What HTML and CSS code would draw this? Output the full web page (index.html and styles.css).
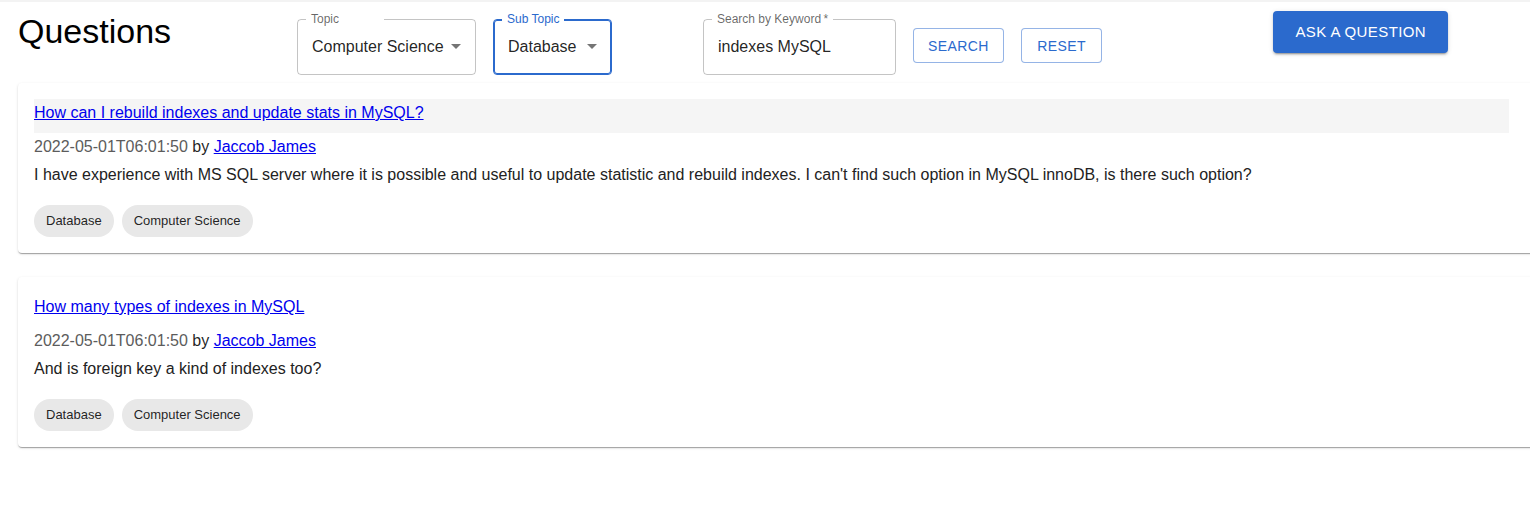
FILE: index.html
```html
<!DOCTYPE html>
<html lang="en">
<head>
<meta charset="utf-8">
<title>Questions</title>
<link rel="stylesheet" href="styles.css">
</head>
<body>
<div class="page">
  <header class="toolbar">
    <h1 class="page-title">Questions</h1>
    <div class="filters">
      <div class="field field-select field-topic">
        <span class="field-label label-topic">Topic</span>
        <span class="field-value">Computer Science</span>
        <svg class="select-arrow" viewBox="0 0 24 24" aria-hidden="true"><path d="M7 10l5 5 5-5z"/></svg>
      </div>
      <div class="field field-select field-subtopic is-focused">
        <span class="field-label">Sub Topic</span>
        <span class="field-value">Database</span>
        <svg class="select-arrow" viewBox="0 0 24 24" aria-hidden="true"><path d="M7 10l5 5 5-5z"/></svg>
      </div>
      <div class="field field-search">
        <span class="field-label">Search by Keyword&thinsp;*</span>
        <span class="field-value">indexes MySQL</span>
      </div>
      <button class="btn btn-outlined" type="button">Search</button>
      <button class="btn btn-outlined btn-reset" type="button">Reset</button>
    </div>
    <button class="btn btn-contained" type="button">Ask a Question</button>
  </header>

  <main class="question-list">
    <article class="question-card">
      <div class="q-title-bar is-highlighted">
        <a class="q-title" href="#">How can I rebuild indexes and update stats in MySQL?</a>
      </div>
      <div class="q-meta"><span class="q-date">2022-05-01T06:01:50</span> by <a href="#">Jaccob James</a></div>
      <p class="q-body">I have experience with MS SQL server where it is possible and useful to update statistic and rebuild indexes. I can't find such option in MySQL innoDB, is there such option?</p>
      <div class="q-tags">
        <span class="chip">Database</span>
        <span class="chip">Computer Science</span>
      </div>
    </article>

    <article class="question-card">
      <div class="q-title-bar">
        <a class="q-title" href="#">How many types of indexes in MySQL</a>
      </div>
      <div class="q-meta"><span class="q-date">2022-05-01T06:01:50</span> by <a href="#">Jaccob James</a></div>
      <p class="q-body">And is foreign key a kind of indexes too?</p>
      <div class="q-tags">
        <span class="chip">Database</span>
        <span class="chip">Computer Science</span>
      </div>
    </article>
  </main>
</div>
</body>
</html>
```

FILE: styles.css
```css
* { box-sizing: border-box; }

html, body {
  margin: 0;
  padding: 0;
  background: #ffffff;
}

body {
  font-family: "Liberation Sans", Arial, Helvetica, sans-serif;
  color: rgba(0, 0, 0, 0.87);
  border-top: 2px solid #f3f3f3;
}

.page {
  overflow: hidden;
  min-height: 504px;
}

/* ---------- header ---------- */
.toolbar {
  display: flex;
  align-items: flex-start;
  padding: 9px 0 0 18px;
}

.page-title {
  flex: 0 0 279px;
  margin: -1px 0 0 0;
  font-size: 34px;
  line-height: 42px;
  font-weight: 400;
  color: #000;
}

.filters {
  display: flex;
  align-items: flex-start;
  gap: 17px;
  margin-top: 8px;
}

.field {
  position: relative;
  height: 56px;
  border: 1px solid rgba(0, 0, 0, 0.23);
  border-radius: 4px;
  padding: 0 14px;
  display: flex;
  align-items: center;
  font-size: 16px;
  color: rgba(0, 0, 0, 0.87);
}

.field-select { padding-right: 32px; }
.field-topic { width: 179px; }
.field-subtopic { width: 119px; }
.field-search { width: 193px; margin-left: 74px; }

.field.is-focused {
  border-color: #2b6acd;
  box-shadow: inset 0 0 0 1px #2b6acd;
}

.field-value {
  line-height: 23px;
  padding-bottom: 2px;
  white-space: nowrap;
}

.field-label {
  position: absolute;
  top: -8px;
  left: 8px;
  padding: 0 5px;
  background: #fff;
  font-size: 12px;
  line-height: 14px;
  color: rgba(0, 0, 0, 0.6);
  white-space: nowrap;
}

.label-topic { padding-right: 45px; }

.is-focused .field-label { color: #2b6acd; }

.select-arrow {
  position: absolute;
  right: 7px;
  top: calc(50% - 13px);
  width: 24px;
  height: 24px;
  fill: rgba(0, 0, 0, 0.54);
}

/* ---------- buttons ---------- */
.btn {
  font-family: inherit;
  text-transform: uppercase;
  letter-spacing: 0.4px;
  border-radius: 4px;
  cursor: pointer;
  white-space: nowrap;
}

.btn-outlined {
  margin-top: 9px;
  height: 35px;
  padding: 0 14px;
  font-size: 14px;
  line-height: 24px;
  background: #fff;
  color: #2b6acd;
  border: 1px solid rgba(43, 106, 205, 0.5);
}

.btn-reset { padding: 0 15.5px; }

.btn-contained {
  margin-left: 171px;
  margin-top: 0;
  height: 42px;
  padding: 0 22px;
  font-size: 15px;
  line-height: 26px;
  color: #fff;
  background: #2b6acd;
  border: none;
  box-shadow: 0 3px 1px -2px rgba(0,0,0,0.2), 0 2px 2px 0 rgba(0,0,0,0.14), 0 1px 5px 0 rgba(0,0,0,0.12);
}

/* ---------- question list ---------- */
.question-list {
  padding: 8px 0 40px 18px;
  display: flex;
  flex-direction: column;
  gap: 24px;
}

.question-card {
  width: 1530px;
  padding: 16px 39px 16px 16px;
  background: #fff;
  border-radius: 4px;
  box-shadow: 0 2px 1px -1px rgba(0,0,0,0.2), 0 1px 1px 0 rgba(0,0,0,0.14), 0 1px 3px 0 rgba(0,0,0,0.12);
  font-size: 16px;
  line-height: 24px;
}

.q-title-bar {
  padding: 2px 0 8px;
}

.q-title-bar.is-highlighted { background: #f5f5f5; }

.question-card a { color: #0000ee; text-decoration: underline; }

.q-meta {
  margin-top: 2px;
  color: rgba(0, 0, 0, 0.87);
}

.q-date { color: #5c5c5c; }

.q-body {
  margin: 4px 0 0;
  color: #222;
}

.q-tags {
  margin-top: 18px;
  display: flex;
  gap: 8px;
}

.chip {
  height: 32px;
  padding: 0 12px;
  border-radius: 16px;
  background: #e8e8e8;
  font-size: 13px;
  line-height: 32px;
  color: rgba(0, 0, 0, 0.87);
}
```
